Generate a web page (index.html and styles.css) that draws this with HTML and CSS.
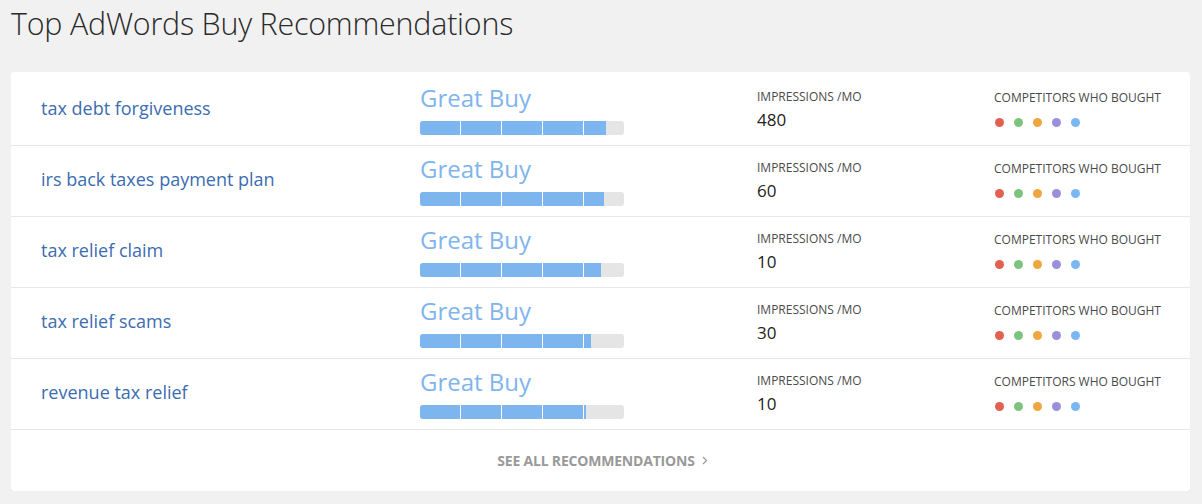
FILE: index.html
```html
<!DOCTYPE html>
<html>
<head>
<meta charset="utf-8">
<link rel="stylesheet" href="styles.css">
</head>
<body>
<h1 class="title">Top AdWords Buy Recommendations</h1>
<div class="card">
  <div class="row">
    <a class="kw">tax debt forgiveness</a>
    <div class="rating">
      <div class="rating-label">Great Buy</div>
      <div class="bar"><div class="fill" style="width:186px"></div><div class="ticks"><span></span><span></span><span></span><span></span><span></span></div></div>
    </div>
    <div class="metric"><div class="label">IMPRESSIONS /MO</div><div class="value">480</div></div>
    <div class="metric comp"><div class="label">COMPETITORS WHO BOUGHT</div><div class="dots"><i class="d1"></i><i class="d2"></i><i class="d3"></i><i class="d4"></i><i class="d5"></i></div></div>
  </div>
  <div class="row">
    <a class="kw">irs back taxes payment plan</a>
    <div class="rating">
      <div class="rating-label">Great Buy</div>
      <div class="bar"><div class="fill" style="width:184px"></div><div class="ticks"><span></span><span></span><span></span><span></span><span></span></div></div>
    </div>
    <div class="metric"><div class="label">IMPRESSIONS /MO</div><div class="value">60</div></div>
    <div class="metric comp"><div class="label">COMPETITORS WHO BOUGHT</div><div class="dots"><i class="d1"></i><i class="d2"></i><i class="d3"></i><i class="d4"></i><i class="d5"></i></div></div>
  </div>
  <div class="row">
    <a class="kw">tax relief claim</a>
    <div class="rating">
      <div class="rating-label">Great Buy</div>
      <div class="bar"><div class="fill" style="width:181px"></div><div class="ticks"><span></span><span></span><span></span><span></span><span></span></div></div>
    </div>
    <div class="metric"><div class="label">IMPRESSIONS /MO</div><div class="value">10</div></div>
    <div class="metric comp"><div class="label">COMPETITORS WHO BOUGHT</div><div class="dots"><i class="d1"></i><i class="d2"></i><i class="d3"></i><i class="d4"></i><i class="d5"></i></div></div>
  </div>
  <div class="row">
    <a class="kw">tax relief scams</a>
    <div class="rating">
      <div class="rating-label">Great Buy</div>
      <div class="bar"><div class="fill" style="width:171px"></div><div class="ticks"><span></span><span></span><span></span><span></span><span></span></div></div>
    </div>
    <div class="metric"><div class="label">IMPRESSIONS /MO</div><div class="value">30</div></div>
    <div class="metric comp"><div class="label">COMPETITORS WHO BOUGHT</div><div class="dots"><i class="d1"></i><i class="d2"></i><i class="d3"></i><i class="d4"></i><i class="d5"></i></div></div>
  </div>
  <div class="row">
    <a class="kw">revenue tax relief</a>
    <div class="rating">
      <div class="rating-label">Great Buy</div>
      <div class="bar"><div class="fill" style="width:166px"></div><div class="ticks"><span></span><span></span><span></span><span></span><span></span></div></div>
    </div>
    <div class="metric"><div class="label">IMPRESSIONS /MO</div><div class="value">10</div></div>
    <div class="metric comp"><div class="label">COMPETITORS WHO BOUGHT</div><div class="dots"><i class="d1"></i><i class="d2"></i><i class="d3"></i><i class="d4"></i><i class="d5"></i></div></div>
  </div>
  <div class="footer"><a class="see-all">SEE ALL RECOMMENDATIONS <svg class="chev" width="6" height="9" viewBox="0 0 6 9"><path d="M1 1 L4.5 4.5 L1 8" fill="none" stroke="#999" stroke-width="1.2"/></svg></a></div>
</div>
</body>
</html>
```

FILE: styles.css
```css
html, body {
  margin: 0;
  padding: 0;
  background: #f1f1f1;
  font-family: "Open Sans", "Liberation Sans", sans-serif;
}
body {
  padding: 0 12px 0 11px;
}
.title {
  margin: 0;
  padding-top: 3px;
  height: 69px;
  font-size: 30.4px;
  font-weight: 300;
  color: #2a2a2a;
  line-height: 42px;
  letter-spacing: -0.2px;
}
.card {
  background: #fff;
  border-radius: 3px;
  box-shadow: 0 2px 0 #e0e0e0;
  width: 1179px;
  padding-top: 3px;
}
.row {
  display: grid;
  grid-template-columns: 379px 337px 237px 1fr;
  padding-left: 30px;
  height: 70px;
  border-bottom: 1px solid #e6e6e6;
  align-items: start;
}
.kw {
  color: #3b6db0;
  font-size: 18px;
  line-height: 24px;
  padding-top: 21px;
}
.rating {
  padding-top: 8px;
}
.rating-label {
  color: #7fb5ec;
  font-size: 24px;
  line-height: 30px;
  margin-bottom: 8px;
}
.bar {
  position: relative;
  width: 204px;
  height: 14px;
  background: #e5e5e5;
  border-radius: 3px;
  overflow: hidden;
}
.fill {
  height: 100%;
  background: #7db6ee;
}
.ticks {
  position: absolute;
  inset: 0;
  display: flex;
}
.ticks span {
  flex: 0 0 41px;
  border-right: 1px solid #fff;
  box-sizing: border-box;
}
.ticks span:last-child { border-right: none; }
.metric {
  padding-top: 14px;
}
.metric.comp {
  padding-top: 15px;
}
.label {
  font-size: 12px;
  color: #4a4a4a;
  line-height: 16px;
}
.value {
  font-size: 17px;
  color: #222;
  line-height: 24px;
  margin-top: 3px;
}
.dots {
  display: flex;
  gap: 10px;
  margin-top: 12px;
  padding-left: 1px;
}
.dots i {
  width: 9px;
  height: 9px;
  border-radius: 50%;
  display: block;
}
.d1 { background: #e2604f; }
.d2 { background: #7cc47d; }
.d3 { background: #f0a63e; }
.d4 { background: #9b8fdc; }
.d5 { background: #7ab7f2; }
.footer {
  height: 61px;
  display: flex;
  align-items: center;
  justify-content: center;
}
.see-all {
  color: #999;
  font-size: 14px;
  font-weight: 700;
  letter-spacing: -0.2px;
  padding-left: 4px;
  display: flex;
  align-items: center;
}
.chev {
  margin-left: 7px;
}
```
